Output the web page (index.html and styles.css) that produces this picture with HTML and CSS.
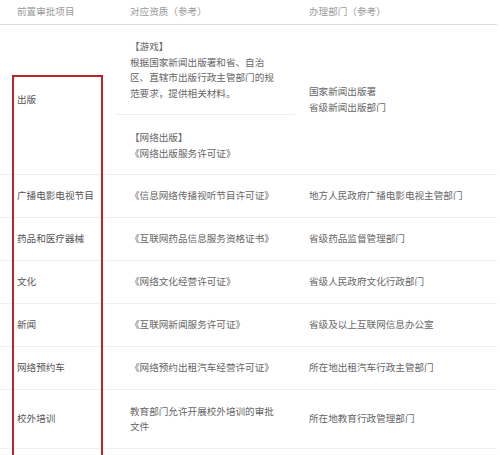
FILE: index.html
```html
<!DOCTYPE html>
<html lang="zh-CN">

<head>
  <meta charset="UTF-8">
  <meta name="viewport" content="width=device-width, initial-scale=1.0">
  <title>前置审批项目</title>
  <link rel="stylesheet" href="styles.css">
</head>

<body>
  <div class="sheet">
    <table class="approvals">
      <thead>
        <tr>
          <th class="item">前置审批项目</th>
          <th class="cert">对应资质（参考）</th>
          <th class="dept">办理部门（参考）</th>
        </tr>
      </thead>
      <tbody>
        <tr class="row_tall">
          <td class="item">出版</td>
          <td class="cert split">
            <div class="part part_top">【游戏】<br>根据国家新闻出版署和省、自治<br>区、直辖市出版行政主管部门的规<br>范要求，提供相关材料。</div>
            <div class="part part_bottom">【网络出版】<br>《网络出版服务许可证》</div>
          </td>
          <td class="dept">国家新闻出版署<br>省级新闻出版部门</td>
        </tr>
        <tr>
          <td class="item">广播电影电视节目</td>
          <td class="cert">《信息网络传播视听节目许可证》</td>
          <td class="dept">地方人民政府广播电影电视主管部门</td>
        </tr>
        <tr>
          <td class="item">药品和医疗器械</td>
          <td class="cert">《互联网药品信息服务资格证书》</td>
          <td class="dept">省级药品监督管理部门</td>
        </tr>
        <tr>
          <td class="item">文化</td>
          <td class="cert">《网络文化经营许可证》</td>
          <td class="dept">省级人民政府文化行政部门</td>
        </tr>
        <tr>
          <td class="item">新闻</td>
          <td class="cert">《互联网新闻服务许可证》</td>
          <td class="dept">省级及以上互联网信息办公室</td>
        </tr>
        <tr>
          <td class="item">网络预约车</td>
          <td class="cert">《网络预约出租汽车经营许可证》</td>
          <td class="dept">所在地出租汽车行政主管部门</td>
        </tr>
        <tr class="row_double">
          <td class="item">校外培训</td>
          <td class="cert">教育部门允许开展校外培训的审批<br>文件</td>
          <td class="dept">所在地教育行政管理部门</td>
        </tr>
      </tbody>
    </table>

    <!-- red annotation frame drawn over the first column -->
    <div class="highlight"></div>
  </div>
</body>

</html>
```

FILE: styles.css
```css
body {
  margin: 0;
  background-color: #fff;
  font-family: "Noto Sans CJK SC", "Noto Sans", sans-serif;
  font-size: 9.6px;
  color: #666;
}

.sheet {
  position: relative;
  width: 500px;
  height: 455px;
  overflow: hidden;
}

.approvals {
  width: 497px;
  border-collapse: collapse;
  table-layout: fixed;
}

.approvals th,
.approvals td {
  text-align: left;
  vertical-align: middle;
  white-space: nowrap;
  line-height: 15.5px;
  padding: 0;
}

.approvals th {
  height: 23px;
  font-weight: normal;
  color: #9a9a9a;
  border-bottom: 1px solid #dcdcdc;
  padding-bottom: 1px;
}

.approvals td {
  height: 42px;
  border-bottom: 1px solid #efefef;
}

.item {
  width: 110px;
  padding-left: 17px !important;
  box-sizing: border-box;
  color: #555;
}

.cert {
  width: 185px;
  padding-left: 20px !important;
  box-sizing: border-box;
}

.dept {
  padding-left: 14px !important;
}

.row_tall td {
  height: 148px;
}

.row_double td {
  height: 58px;
}

.cert.split {
  padding-left: 0 !important;
}

.part {
  margin-left: 5px;
  padding-left: 15px;
}

.part_top {
  padding-top: 14px;
  padding-bottom: 13px;
  border-bottom: 1px solid #efefef;
}

.part_bottom {
  padding-top: 15px;
  padding-bottom: 13px;
}

.highlight {
  position: absolute;
  left: 12px;
  top: 75px;
  width: 87px;
  height: 400px;
  border: 2px solid #b8232d;
}
```
